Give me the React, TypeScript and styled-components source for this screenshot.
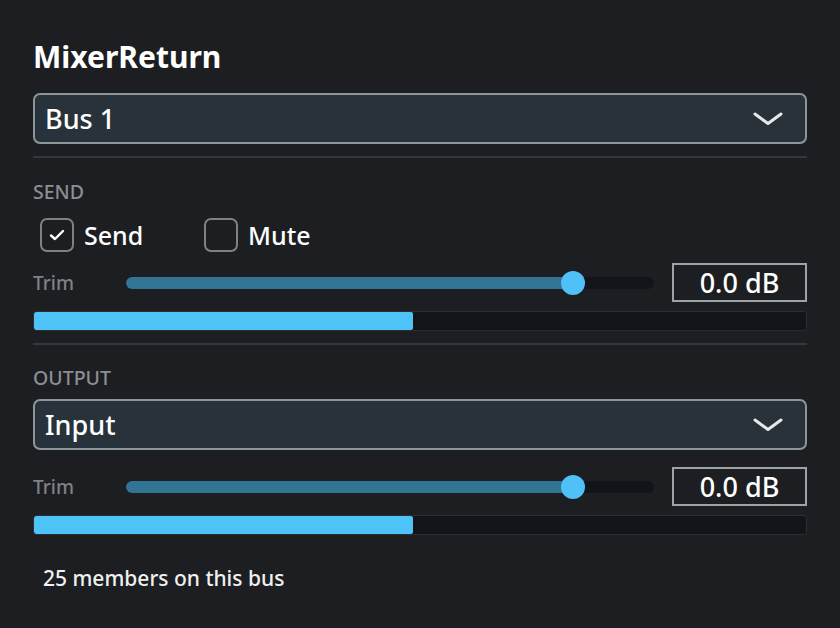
import React from "react";
import styled, { createGlobalStyle } from "styled-components";

const GlobalStyle = createGlobalStyle`
  html, body {
    margin: 0;
    padding: 0;
    background: #1c1e22;
  }
  body {
    font-family: "Noto Sans", "Open Sans", sans-serif;
    color: #f2f2f2;
  }
`;

const Panel = styled.div`
  width: 840px;
  height: 628px;
  box-sizing: border-box;
  padding: 37px 33px 0 33px;
  background: #1c1e22;
  display: flex;
  flex-direction: column;
`;

const Title = styled.h1`
  margin: 0;
  font-size: 30px;
  font-weight: 700;
  line-height: 40px;
  color: #ffffff;
`;

const SelectBox = styled.div<{ $mt: number }>`
  margin-top: ${(p) => p.$mt}px;
  height: 51px;
  box-sizing: border-box;
  border: 2px solid #8c9799;
  border-radius: 7px;
  background: #28323a;
  display: flex;
  align-items: center;
  justify-content: space-between;
  padding: 0 22px 0 10px;
  font-size: 27px;
  font-weight: 500;
  color: #ffffff;
`;

const Divider = styled.div<{ $mt: number }>`
  margin-top: ${(p) => p.$mt}px;
  height: 2px;
  background: #34383d;
`;

const SectionLabel = styled.div<{ $mt: number }>`
  margin-top: ${(p) => p.$mt}px;
  font-size: 19.5px;
  line-height: 24px;
  color: #8b8e92;
  font-weight: 500;
`;

const CheckRow = styled.div`
  margin-top: 14px;
  display: flex;
  align-items: center;
  padding-left: 7px;
`;

const CheckItem = styled.label<{ $w: number }>`
  display: flex;
  align-items: center;
  gap: 10px;
  width: ${(p) => p.$w}px;
  font-size: 25px;
  font-weight: 500;
  color: #ffffff;
`;

const Box = styled.span`
  width: 34px;
  height: 34px;
  box-sizing: border-box;
  border: 2px solid #7d8285;
  border-radius: 7px;
  display: flex;
  align-items: center;
  justify-content: center;
`;

const TrimRow = styled.div<{ $mt: number }>`
  margin-top: ${(p) => p.$mt}px;
  display: flex;
  align-items: center;
  height: 39px;
`;

const TrimLabel = styled.span`
  width: 93px;
  font-size: 19px;
  font-weight: 500;
  color: #7f8286;
`;

const Track = styled.div`
  position: relative;
  width: 528px;
  height: 12px;
  border-radius: 6px;
  background: #111419;
`;

const TrackFill = styled.div`
  position: absolute;
  left: 0;
  top: 0;
  bottom: 0;
  border-radius: 6px;
  background: #327494;
`;

const Thumb = styled.div`
  position: absolute;
  top: 50%;
  width: 24px;
  height: 24px;
  margin-left: -12px;
  margin-top: -12px;
  border-radius: 50%;
  background: #4fc1f7;
`;

const DbBox = styled.div`
  margin-left: auto;
  width: 135px;
  height: 39px;
  box-sizing: border-box;
  border: 2px solid #9aa3a5;
  display: flex;
  align-items: center;
  justify-content: center;
  font-size: 27px;
  font-weight: 500;
  color: #ffffff;
`;

const Meter = styled.div`
  margin-top: 9px;
  height: 20px;
  box-sizing: border-box;
  border: 1px solid #2a2d31;
  border-radius: 3px;
  background: #131418;
  overflow: hidden;
`;

const MeterFill = styled.div`
  height: 100%;
  background: #4dc3f8;
  border-radius: 2px;
`;

const Footer = styled.div`
  margin-top: 30px;
  padding-left: 10px;
  font-size: 21px;
  font-weight: 500;
  line-height: 26px;
  color: #f0f0f0;
`;

const Chevron = () => (
  <svg width="30" height="14" viewBox="0 0 30 14" fill="none">
    <path d="M2 2 L15 11.5 L28 2" stroke="#e8e8e8" strokeWidth="3" strokeLinecap="round" strokeLinejoin="round" />
  </svg>
);

const Check = () => (
  <svg width="16" height="12" viewBox="0 0 16 12" fill="none">
    <path d="M2 6.5 L6 10 L14 2" stroke="#ffffff" strokeWidth="2.4" strokeLinecap="round" strokeLinejoin="round" />
  </svg>
);

const Slider = ({ value }: { value: number }) => (
  <Track>
    <TrackFill style={{ width: `${value * 100}%` }} />
    <Thumb style={{ left: `${value * 100}%` }} />
  </Track>
);

const LevelMeter = ({ level }: { level: number }) => (
  <Meter>
    <MeterFill style={{ width: `${level * 100}%` }} />
  </Meter>
);

export default function App() {
  const sliderVal = (573 - 126) / 528;
  const meterLevel = (413 - 33) / 774;
  return (
    <>
      <GlobalStyle />
      <Panel>
        <Title>MixerReturn</Title>
        <SelectBox $mt={16}>
          <span>Bus 1</span>
          <Chevron />
        </SelectBox>
        <Divider $mt={12} />
        <SectionLabel $mt={22}>SEND</SectionLabel>
        <CheckRow>
          <CheckItem $w={164}>
            <Box>
              <Check />
            </Box>
            Send
          </CheckItem>
          <CheckItem $w={140}>
            <Box />
            Mute
          </CheckItem>
        </CheckRow>
        <TrimRow $mt={11}>
          <TrimLabel>Trim</TrimLabel>
          <Slider value={sliderVal} />
          <DbBox>0.0 dB</DbBox>
        </TrimRow>
        <LevelMeter level={meterLevel} />
        <Divider $mt={12} />
        <SectionLabel $mt={21}>OUTPUT</SectionLabel>
        <SelectBox $mt={9}>
          <span>Input</span>
          <Chevron />
        </SelectBox>
        <TrimRow $mt={17}>
          <TrimLabel>Trim</TrimLabel>
          <Slider value={sliderVal} />
          <DbBox>0.0 dB</DbBox>
        </TrimRow>
        <LevelMeter level={meterLevel} />
        <Footer>25 members on this bus</Footer>
      </Panel>
    </>
  );
}
